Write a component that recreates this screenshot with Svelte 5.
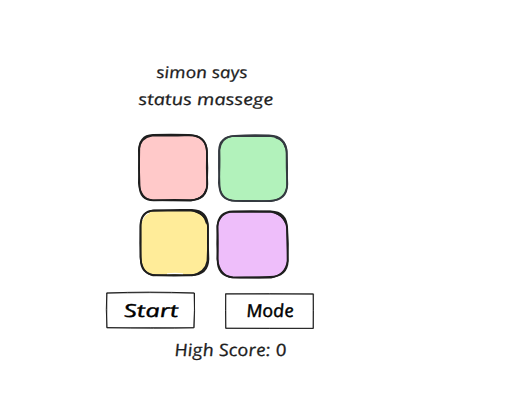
<script>
  const pads = [
    {
      name: 'red', fill: '#ffc9c9', ink: '#1e1e1e',
      shape: 'M21 7 Q39 6.5 57 7 Q74.5 7.5 75 24 Q74.5 40 75.3 56 Q75 72 58 72.2 Q40 71.8 22 72.3 Q7.5 72.5 7.5 57 Q6.6 40 7.2 24 Q6.5 7.5 21 7Z',
      echo: 'M20 7.6 Q39 8 59 7.2 Q73 8 74.8 22 Q76 40 75 58 Q73.5 70.5 59 72.6 Q40 72.5 20 72 Q8.5 71 6.8 55 Q7.6 40 6.8 22 Q8 9.5 20 7.6Z',
      blot: 'M73.8 62 Q72 69.5 64 71.2'
    },
    {
      name: 'green', fill: '#b2f2bb', ink: '#343a40',
      shape: 'M23 7.8 Q40 6.8 57 7.5 Q74 8 74.6 25 Q74.5 40 75.3 56 Q75 72.5 58 72.8 Q40 73.5 23 72.8 Q7.3 72 7.5 57 Q6.7 40 7 23 Q7 8.5 23 7.8Z',
      echo: 'M21 8 Q39 8.5 59 8.1 Q73 9.5 74.8 23 Q75.6 40 75 58 Q73.5 71 59 73.2 Q40 72.6 20 72.6 Q8.5 71 6.8 55 Q8 40 7.5 22 Q9 9.5 21 8Z',
      blot: 'M64 9.8 Q71.5 12 73.2 19'
    },
    {
      name: 'yellow', fill: '#ffec99', ink: '#1e1e1e',
      shape: 'M22 6.5 Q40 5.7 60 6 Q75.6 6.5 76 23 Q75.6 39 76.4 55 Q76 71 59 71.2 Q42 71.8 24 71.2 Q8.7 70.5 8.8 55 Q7.9 39 8.4 23 Q8.5 7 22 6.5Z',
      echo: 'M21 6.5 Q40 6.8 59 6.8 Q73 8.5 75.8 21 Q76.6 40 75.4 57 Q73.5 68.5 60 71.4 Q42 70.8 21 71.4 Q9.5 69 8.4 53 Q9 38 8.6 21 Q9.5 8 21 6.5Z',
      blot: 'M64 7.8 Q72.5 10 74.4 19',
      glint: 'M10.5 16 Q12 10.5 17 9 M35 69.8 Q43 69 51 69.8'
    },
    {
      name: 'purple', fill: '#eebefa', ink: '#1e1e1e',
      shape: 'M21 7.4 Q39 6.9 59 7.4 Q74.5 8 75 24 Q75.3 40 75.8 57 Q75 72.5 58 73 Q38 74.2 21 73.3 Q5.4 72 5.7 56 Q4.9 40 5.5 23 Q6 7.7 21 7.4Z',
      echo: 'M20 7.7 Q39 8 58 7.6 Q72 9.5 75.2 23 Q76.5 40 75.6 57 Q73.5 71 59 73.6 Q38 73.3 20 73.5 Q7.5 71.5 5.3 55 Q6.5 40 5.3 22 Q7.5 9 20 7.7Z',
      blot: 'M63 9 Q71 11.5 73.6 19'
    }
  ];

  const buttons = [
    {
      label: 'Start', x: 18.5, length: 54.5, size: 18,
      shape: 'M.8 1 Q42 -.7 88.5 1 Q88.7 18 87.8 35.8 Q50 36.7 1 35.6 Q-.3 17 .8 1Z',
      echo: 'M.5 1.1 Q45 .2 88 1.1 Q89.1 19 88.2 35.7 Q44 35.2 .7 35.9 Q.9 18 .9 .7'
    },
    {
      label: 'Mode', x: 22, length: 47.5, size: 18,
      shape: 'M.8 2 Q45 1.4 88.1 2.1 Q88.7 18 88.1 36.3 Q44 36.6 .9 36.2 Q.2 18 .8 2Z',
      echo: 'M.3 1.7 Q46 2.4 88.6 1.8 Q87.8 18 88.5 36.5 Q44 36 .5 36.4 Q1.2 18 .5 1.6'
    }
  ];
</script>

{#snippet lettering(text, x, y, size, length)}
  <text transform="translate({x} {y}) skewX(8)" font-size={size} textLength={length} lengthAdjust="spacingAndGlyphs">{text}</text>
{/snippet}

<main>
  <header>
    <h1><svg width="140" height="27">{@render lettering('simon says', 21, 17.5, 16, 91)}</svg></h1>
    <p><svg width="140" height="27">{@render lettering('status massege', 3, 17.5, 16, 135)}</svg></p>
  </header>

  <section class="pads">
    {#each pads as pad (pad.name)}
      <svg class="pad" width="80" height="76" fill="none" stroke={pad.ink}>
        <path d={pad.shape} fill={pad.fill} stroke-width="1.8" />
        {#if pad.glint}
          <path d={pad.glint} stroke="#fff" stroke-width="1.2" />
        {/if}
        <path d={pad.echo} stroke-width="1.6" />
        <path d={pad.blot} stroke-width="1.4" stroke-linecap="round" />
      </svg>
    {/each}
  </section>

  <section class="actions">
    {#each buttons as button (button.label)}
      <button type="button">
        <svg width="89" height="38" fill="none" stroke="#1e1e1e">
          <path d={button.shape} stroke-width="1" />
          <path d={button.echo} stroke-width=".7" />
          <g class="label">{@render lettering(button.label, button.x, 25, button.size, button.length)}</g>
        </svg>
      </button>
    {/each}
  </section>

  <footer><svg width="120" height="30">{@render lettering('High Score: 0', 4, 21, 17, 112)}</svg></footer>
</main>

<style>
  :global(body) {
    background: #fff;
  }

  main {
    display: flex;
    flex-direction: column;
    align-items: center;
    box-sizing: border-box;
    width: 420px;
    min-height: 418px;
    padding-top: 60px;
  }

  h1,
  p {
    margin: 0;
    padding-right: 8px;
    line-height: 0;
  }

  svg {
    display: block;
    overflow: visible;
  }

  text {
    font-family: Excalifont, "Open Sans", "Noto Sans", sans-serif;
    font-style: italic;
    font-weight: 400;
    fill: #1e1e1e;
    stroke: #1e1e1e;
    stroke-width: 0.25;
    stroke-linejoin: round;
  }

  .label text {
    fill: #000;
    stroke: #000;
    stroke-width: 0.4;
  }

  .pads {
    display: grid;
    grid-template-columns: 80px 80px;
    margin: 14px 0 0 4px;
  }

  .actions {
    display: flex;
    gap: 30px;
    margin-top: 12px;
  }

  button {
    padding: 0;
    border: 0;
    background: none;
  }

  footer {
    margin: 5px 0 0 42px;
  }
</style>
